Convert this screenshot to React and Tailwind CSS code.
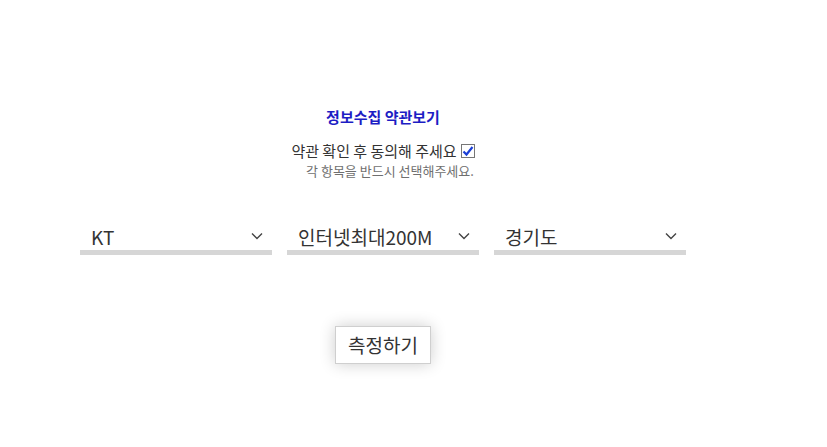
import { useState } from 'react'

const font = { fontFamily: '"Noto Sans CJK KR", "Noto Sans", sans-serif' }

function Chevron() {
  return (
    <svg width="12" height="8" viewBox="0 0 12 8" className="shrink-0">
      <path d="M1 1.5 L6 6.5 L11 1.5" fill="none" stroke="#444" strokeWidth="1.4" />
    </svg>
  )
}

function Picker({ value }) {
  return (
    <div className="w-[192px] border-b-[5px] border-[#d6d6d6]">
      <div className="flex items-center justify-between pl-[11px] pr-[9px] pt-[4px] h-[32px]">
        <span className="text-[19px] leading-none text-[#333]">{value}</span>
        <Chevron />
      </div>
    </div>
  )
}

export default function App() {
  const [agree, setAgree] = useState(true)

  return (
    <div className="w-[827px] h-[447px] bg-white" style={font}>
      <div className="w-[606px] ml-[80px] pt-[106px] flex flex-col items-center">
        <p className="text-[15px] leading-[22px] font-bold text-[#1d1dc4]">정보수집 약관보기</p>
        <label
          className="mt-[13px] flex items-center gap-[4px] text-[15px] leading-[20px] text-[#333] cursor-pointer"
          onClick={() => setAgree(!agree)}
        >
          약관 확인 후 동의해 주세요
          <span className="w-[14px] h-[14px] border border-[#767676] bg-white flex items-center justify-center">
            {agree && (
              <svg width="12" height="12" viewBox="0 0 12 12">
                <path d="M1.5 6.5 L4.5 9.5 L10.5 2" fill="none" stroke="#1b3fd6" strokeWidth="2.2" />
              </svg>
            )}
          </span>
        </label>
        <p className="mt-[1px] pl-[14px] text-[13px] leading-[18px] text-[#6f6f6f]">각 항목을 반드시 선택해주세요.</p>

        <div className="mt-[38px] w-full flex gap-[15px]">
          <Picker value="KT" />
          <Picker value="인터넷최대200M" />
          <Picker value="경기도" />
        </div>

        <button className="mt-[71px] w-[96px] h-[38px] border border-[#cfcfcf] bg-white text-[19px] text-[#333] shadow-[0_0_16px_rgba(0,0,0,0.2)]">
          측정하기
        </button>
      </div>
    </div>
  )
}
